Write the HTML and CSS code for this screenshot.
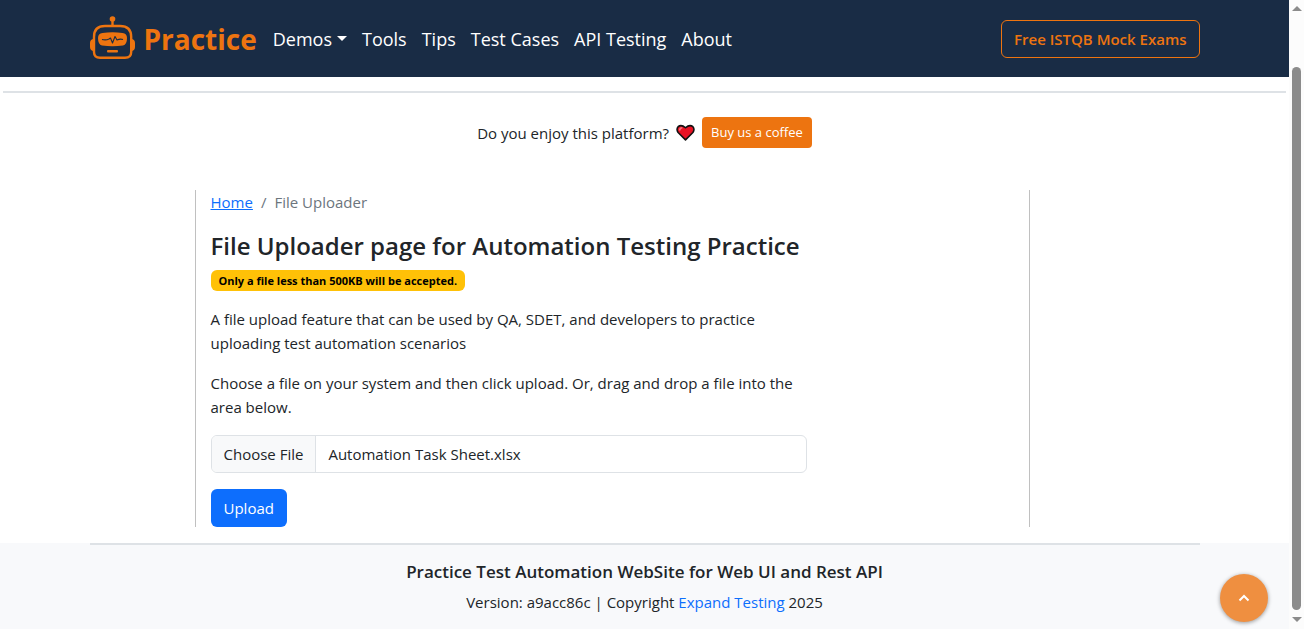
FILE: index.html
```html
<!DOCTYPE html>
<html lang="en">
<head>
<meta charset="utf-8">
<meta name="viewport" content="width=device-width, initial-scale=1">
<title>File Uploader page for Automation Testing Practice</title>
<link rel="stylesheet" href="styles.css">
</head>
<body>
<div class="page">
  <header class="navbar">
    <div class="container navbar-inner">
      <a class="brand" href="#">
        <svg class="brand-logo" viewBox="0 0 46 44" aria-hidden="true">
          <g fill="none" stroke="#ed7410" stroke-width="2.4">
            <path d="M22.500 4V10"/>
            <path d="M15 10H30Q41.200 10 41.200 21V36Q41.200 41.800 35 41.800H10Q4 41.800 4 36V21Q4 10 15 10Z"/>
          </g>
          <g fill="#ed7410">
            <circle cx="22.500" cy="3" r="2.800"/>
            <path d="M4 23C1 23 0 25 0 27V31C0 33 1 35 4 35ZM41 23C44 23 45 25 45 27V31C45 33 44 35 41 35Z"/>
            <path d="M12.500 17Q22.500 15.500 32.500 17Q37 17.500 37 22Q37 28.500 33 29.500Q22.500 31 12 29.500Q8 28.500 8 22Q8 17.500 12.500 17Z"/>
            <rect x="17" y="34" width="11" height="2.500" rx="1"/>
          </g>
          <path d="M12 23.500Q16 24.500 19 23L20.500 22L22.500 27L25 20.500L27 24Q30 22.500 33 23.500" fill="none" stroke="#192c45" stroke-width="1.100" stroke-linejoin="round"/>
        </svg>
        <span>Practice</span>
      </a>
      <nav class="nav">
        <a class="nav-link dropdown" href="#">Demos</a>
        <a class="nav-link" href="#">Tools</a>
        <a class="nav-link" href="#">Tips</a>
        <a class="nav-link" href="#">Test Cases</a>
        <a class="nav-link" href="#">API Testing</a>
        <a class="nav-link" href="#">About</a>
      </nav>
      <a class="btn btn-outline" href="#">Free ISTQB Mock Exams</a>
    </div>
  </header>
  <hr class="rule rule-top">
  <div class="support">
    <span>Do you enjoy this platform?</span>
    <svg class="heart" viewBox="0 0 18 16" aria-hidden="true">
      <path d="M9 15L2 8Q0 5 2 2.500Q5 0 9 3.500Q13 0 16 2.500Q18 5 16 8Z" fill="#e81224" stroke="#111" stroke-width="1.500" stroke-linejoin="round"/>
      <path d="M3.500 6Q3.500 3.500 6 3.500" fill="none" stroke="#f4737c" stroke-width="1.500"/>
    </svg>
    <a class="btn btn-coffee" href="#">Buy us a coffee</a>
  </div>
  <div class="container">
    <main class="content">
      <nav class="breadcrumb" aria-label="breadcrumb">
        <a href="#">Home</a>
        <span>/</span>
        <span>File Uploader</span>
      </nav>
      <h1 class="title">File Uploader page for Automation Testing Practice</h1>
      <span class="badge">Only a file less than 500KB will be accepted.</span>
      <p class="text">A file upload feature that can be used by QA, SDET, and developers to practice uploading test automation scenarios</p>
      <p class="text">Choose a file on your system and then click upload. Or, drag and drop a file into the area below.</p>
      <form class="upload">
        <label class="file">
          <input class="file-input" type="file">
          <span class="file-button">Choose File</span>
          <span class="file-name">Automation Task Sheet.xlsx</span>
        </label>
        <button class="btn btn-primary" type="button">Upload</button>
      </form>
    </main>
  </div>
  <footer class="footer">
    <div class="container">
      <hr class="rule">
      <h2 class="footer-title">Practice Test Automation WebSite for Web UI and Rest API</h2>
      <p class="footer-text">Version: a9acc86c | Copyright <a href="#">Expand Testing</a> 2025</p>
    </div>
  </footer>
</div>
<div class="scrollbar" aria-hidden="true">
  <span class="arrow arrow-up"></span>
  <span class="thumb"></span>
  <span class="arrow arrow-down"></span>
</div>
<button class="to-top" type="button" aria-label="Back to top">
  <svg viewBox="0 0 12 8" width="12" height="8" aria-hidden="true"><path d="M1.500 6.500L6 2L10.500 6.500" fill="none" stroke="#fff" stroke-width="2"/></svg>
</button>
</body>
</html>
```
FILE: styles.css
```css
* {
  box-sizing: border-box;
}

body {
  margin: 0;
  min-height: 100vh;
  display: grid;
  grid-template-columns: minmax(0, 1fr) 15px;
  font-family: "Open Sans", "Noto Sans", sans-serif;
  font-size: 15px;
  line-height: 24px;
  color: #212529;
  background: #fff;
}

a {
  color: #0d6efd;
}

.page {
  display: flex;
  flex-direction: column;
}

.container {
  width: 100%;
  max-width: 1140px;
  margin: 0 auto;
  padding: 0 15px;
}

.navbar {
  background: #192c45;
  padding: 16px 0 15px;
}

.navbar-inner {
  display: flex;
  align-items: center;
}

.brand {
  display: flex;
  align-items: center;
  gap: 8px;
  margin-right: 16px;
  font-size: 28px;
  line-height: 46px;
  font-weight: 700;
  color: #ed7410;
  text-decoration: none;
}

.brand-logo {
  width: 46px;
  height: 44px;
  margin-bottom: 2px;
}

.nav {
  display: flex;
  gap: 15px;
  margin-right: auto;
}

.nav-link {
  font-size: 18px;
  line-height: 30px;
  color: #fff;
  text-decoration: none;
}

.dropdown::after {
  content: "";
  display: inline-block;
  margin-left: 5px;
  vertical-align: 5px;
  border: 5px solid transparent;
  border-top-color: #fff;
  border-bottom: 0;
}

.btn {
  display: inline-block;
  padding: 6px 12px;
  border: 1px solid transparent;
  border-radius: 6px;
  font-family: inherit;
  font-size: 15px;
  line-height: 24px;
  text-decoration: none;
  cursor: pointer;
}

.btn-outline {
  border-color: #ed7410;
  color: #ed7410;
  font-weight: 600;
}

.btn-coffee {
  padding: 4px 8px;
  border-radius: 4px;
  font-size: 13px;
  line-height: 21px;
  color: #fff;
  background: #ed7410;
}

.btn-primary {
  color: #fff;
  background: #0d6efd;
}

.rule {
  width: 100%;
  height: 2px;
  margin: 0;
  border: 0;
  background: #dee2e6;
}

.rule-top {
  width: auto;
  margin: 14px 3px 0;
}

.support {
  display: flex;
  justify-content: center;
  align-items: center;
  gap: 7px;
  margin: 24px 0 42px;
}

.heart {
  width: 19px;
  height: 17px;
}

.content {
  max-width: 835px;
  margin: 0 0 16px 105px;
  padding: 0 222px 0 15px;
  border: solid #c0c0c0;
  border-width: 0 1px;
}

.breadcrumb {
  display: flex;
  gap: 8px;
  margin-bottom: 16px;
  color: #6c757d;
}

.title {
  margin: 0 0 8px;
  font-size: 24px;
  line-height: 32px;
  font-weight: 600;
  white-space: nowrap;
}

.badge {
  display: block;
  width: fit-content;
  margin-bottom: 16px;
  padding: 4px 8px;
  border-radius: 6px;
  font-size: 11px;
  line-height: 13px;
  font-weight: 700;
  color: #000;
  background: #ffc107;
}

.text {
  margin: 0 0 16px;
}

.upload {
  display: flex;
  flex-direction: column;
  align-items: flex-start;
  gap: 16px;
}

.file {
  position: relative;
  display: flex;
  width: 100%;
  overflow: hidden;
  border: 1px solid #dee2e6;
  border-radius: 6px;
  line-height: 24px;
  cursor: pointer;
}

.file-input {
  position: absolute;
  inset: 0;
  opacity: 0;
}

.file-button {
  padding: 6px 12px;
  border-right: 1px solid #dee2e6;
  background: #f8f9fa;
}

.file-name {
  padding: 6px 12px;
}

.footer {
  flex: 1;
  text-align: center;
  background: #f8f9fb;
}

.footer-title {
  margin: 15px 0 6px;
  font-size: 17px;
  line-height: 24px;
  font-weight: 600;
}

.footer-text {
  margin: 0;
}

.footer-text a {
  text-decoration: none;
}

.scrollbar {
  display: flex;
  flex-direction: column;
  align-items: center;
  padding: 6px 0 7px;
  background: #fcfcfc;
}

.arrow {
  border: 5px solid transparent;
}

.arrow-up {
  border-top: 0;
  border-bottom-color: #8b8b8b;
}

.arrow-down {
  border-bottom: 0;
  border-top-color: #8b8b8b;
}

.thumb {
  flex: 1;
  width: 9px;
  margin: 56px 0 7px;
  border-radius: 5px;
  background: #8b8b8b;
}

.to-top {
  position: fixed;
  right: 36px;
  bottom: 7px;
  width: 48px;
  height: 48px;
  display: grid;
  place-items: center;
  padding: 0;
  border: 0;
  border-radius: 50%;
  background: #ef8f40;
  box-shadow: 0 1px 4px rgba(0, 0, 0, 0.4);
  cursor: pointer;
}
```
